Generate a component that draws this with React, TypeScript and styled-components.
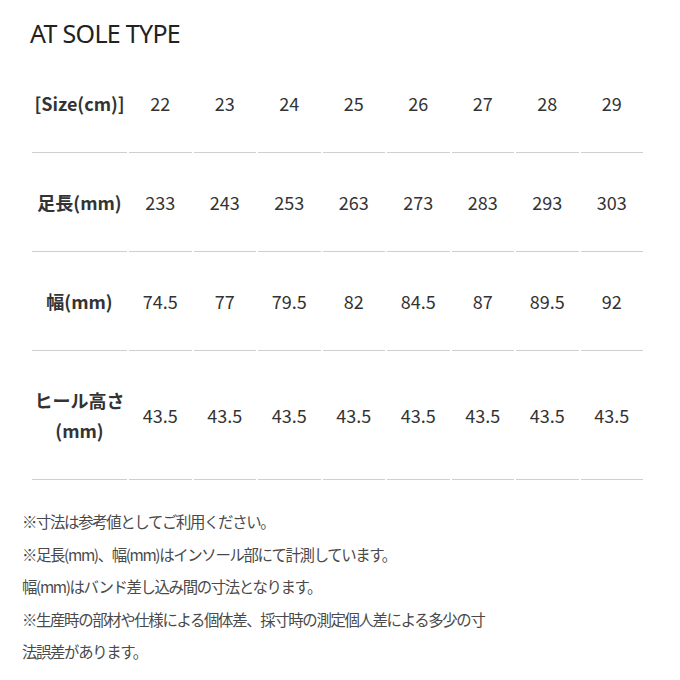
import React from 'react';
import styled, { createGlobalStyle } from 'styled-components';

const GlobalStyle = createGlobalStyle`
  body {
    margin: 0;
    background: #fff;
    font-family: "Noto Sans CJK JP", "Noto Sans", sans-serif;
  }
`;

const Page = styled.div`
  width: 680px;
  height: 680px;
  padding: 16px 30px 0 30px;
  box-sizing: border-box;
  overflow: hidden;
`;

const Title = styled.h2`
  margin: 0 0 4px;
  font-family: "Noto Sans", sans-serif;
  font-weight: 400;
  font-size: 25px;
  line-height: 34px;
  color: #222;
  letter-spacing: -0.7px;
`;

const SizeTable = styled.table`
  border-collapse: separate;
  border-spacing: 2px 0;
  color: #333;
`;

const Cell = styled.td<{ $head?: boolean }>`
  width: ${(p) => (p.$head ? '95px' : '62.5px')};
  padding: 34px 0 34px;
  border-bottom: 1px solid #cfcfcf;
  text-align: center;
  vertical-align: middle;
  font-size: 18px;
  line-height: 30px;
  font-weight: ${(p) => (p.$head ? 700 : 400)};
  white-space: nowrap;
`;

const Notes = styled.div`
  width: 472px;
  margin: 25px 0 0 -8px;
  color: #4a4a4a;
  font-size: 15.4px;
  line-height: 32.5px;
  letter-spacing: -1.35px;
`;

const Note = styled.p`
  margin: 0;
`;

const sizes = ['22', '23', '24', '25', '26', '27', '28', '29'];

const rows: { label: React.ReactNode; values: string[] }[] = [
  { label: '足長(mm)', values: ['233', '243', '253', '263', '273', '283', '293', '303'] },
  { label: '幅(mm)', values: ['74.5', '77', '79.5', '82', '84.5', '87', '89.5', '92'] },
  {
    label: (
      <>
        ヒール高さ
        <br />
        (mm)
      </>
    ),
    values: Array(8).fill('43.5'),
  },
];

const notes = [
  '※寸法は参考値としてご利用ください。',
  '※足長(mm)、幅(mm)はインソール部にて計測しています。',
  '幅(mm)はバンド差し込み間の寸法となります。',
  '※生産時の部材や仕様による個体差、採寸時の測定個人差による多少の寸法誤差があります。',
];

const App: React.FC = () => {
  return (
    <Page>
      <GlobalStyle />
      <Title>AT SOLE TYPE</Title>
      <SizeTable>
        <tbody>
          <tr>
            <Cell $head>[Size(cm)]</Cell>
            {sizes.map((s) => (
              <Cell key={s}>{s}</Cell>
            ))}
          </tr>
          {rows.map((row, i) => (
            <tr key={i}>
              <Cell $head>{row.label}</Cell>
              {row.values.map((v, j) => (
                <Cell key={j}>{v}</Cell>
              ))}
            </tr>
          ))}
        </tbody>
      </SizeTable>
      <Notes>
        {notes.map((n, i) => (
          <Note key={i}>{n}</Note>
        ))}
      </Notes>
    </Page>
  );
};

export default App;
